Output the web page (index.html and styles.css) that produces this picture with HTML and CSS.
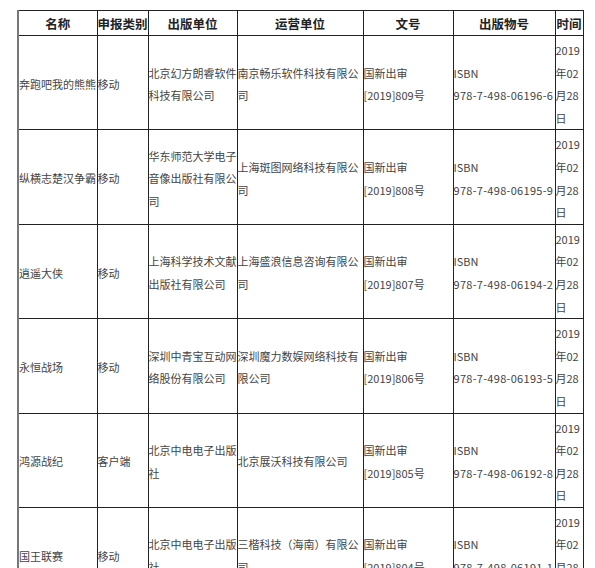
FILE: index.html
```html
<!DOCTYPE html>
<html lang="zh">
<head>
<meta charset="utf-8">
<link rel="stylesheet" href="styles.css">
</head>
<body>
<table class="list">
<colgroup>
<col class="c-name"><col class="c-type"><col class="c-pub"><col class="c-op"><col class="c-doc"><col class="c-isbn"><col class="c-date">
</colgroup>
<thead>
<tr><th>名称</th><th>申报类别</th><th>出版单位</th><th>运营单位</th><th>文号</th><th>出版物号</th><th>时间</th></tr>
</thead>
<tbody>
<tr><td>奔跑吧我的熊熊</td><td>移动</td><td>北京幻方朗睿软件科技有限公司</td><td>南京畅乐软件科技有限公司</td><td>国新出审[2019]809号</td><td>ISBN <span class="num">978-7-498-06196-6</span></td><td>2019年02月28日</td></tr>
<tr><td>纵横志楚汉争霸</td><td>移动</td><td>华东师范大学电子音像出版社有限公司</td><td>上海斑图网络科技有限公司</td><td>国新出审[2019]808号</td><td>ISBN <span class="num">978-7-498-06195-9</span></td><td>2019年02月28日</td></tr>
<tr><td>逍遥大侠</td><td>移动</td><td>上海科学技术文献出版社有限公司</td><td>上海盛浪信息咨询有限公司</td><td>国新出审[2019]807号</td><td>ISBN <span class="num">978-7-498-06194-2</span></td><td>2019年02月28日</td></tr>
<tr><td>永恒战场</td><td>移动</td><td>深圳中青宝互动网络股份有限公司</td><td>深圳魔力数娱网络科技有限公司</td><td>国新出审[2019]806号</td><td>ISBN <span class="num">978-7-498-06193-5</span></td><td>2019年02月28日</td></tr>
<tr><td>鸿源战纪</td><td>客户端</td><td>北京中电电子出版社</td><td>北京展沃科技有限公司</td><td>国新出审[2019]805号</td><td>ISBN <span class="num">978-7-498-06192-8</span></td><td>2019年02月28日</td></tr>
<tr><td>国王联赛</td><td>移动</td><td>北京中电电子出版社</td><td>三楷科技（海南）有限公司</td><td>国新出审[2019]804号</td><td>ISBN <span class="num">978-7-498-06191-1</span></td><td>2019年02月28日</td></tr>
</tbody>
</table>
</body>
</html>
```
FILE: styles.css
```css
html, body {
  margin: 0;
  padding: 0;
  background: #fff;
}
body {
  padding: 10px 0 0 17px;
  font-family: "Noto Sans CJK SC", "Noto Sans", sans-serif;
}
.list {
  border-collapse: collapse;
  table-layout: fixed;
  width: 565px;
  border-left: 2px solid #777;
  border-top: 1px solid #333;
  border-right: 1px solid #222;
}
.c-name { width: 79px; }
.c-type { width: 51px; }
.c-pub { width: 89px; }
.c-op { width: 126px; }
.c-doc { width: 90px; }
.c-isbn { width: 102px; }
.c-date { width: 28px; }
.list th,
.list td {
  border: 1px solid #222;
  padding: 0;
  vertical-align: middle;
}
.list th {
  font-size: 12.5px;
  font-weight: bold;
  color: #222;
  line-height: 23px;
  height: 24px;
  text-align: center;
  white-space: nowrap;
}
.list td {
  font-size: 11px;
  color: #444;
  line-height: 22.6px;
  padding-top: 3px;
  text-align: left;
}
.num {
  display: inline-block;
  white-space: nowrap;
  letter-spacing: 0.3px;
}
.list th:first-child,
.list td:first-child {
  border-left: 2px solid #777;
}
```
